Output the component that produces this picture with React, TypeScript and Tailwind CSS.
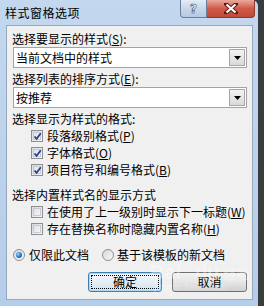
import React from "react";

const F = { fontFamily: '"Noto Sans CJK SC", "Noto Sans", sans-serif' };

function Check({ checked }: { checked: boolean }) {
  return (
    <span className="relative w-[12px] h-[12px] border border-[#8e8f8f] bg-gradient-to-br from-[#d6d9de] to-[#f8f8f8] shrink-0 flex items-center justify-center">
      <span className="w-[8px] h-[8px] border border-[#c7cbd1] bg-gradient-to-br from-[#dfe2e6] to-[#f6f6f6] flex items-center justify-center">
        {checked && (
          <svg width="9" height="9" viewBox="0 0 9 9" className="absolute left-[1px] top-[1px]">
            <path d="M1.5 4.5 L3.6 6.8 L7.8 1.2" fill="none" stroke="#2a3e92" strokeWidth="1.8" />
          </svg>
        )}
      </span>
    </span>
  );
}

function Radio({ on }: { on: boolean }) {
  return (
    <span className="w-[12px] h-[12px] rounded-full border border-[#8e8f8f] bg-gradient-to-br from-[#d4d7dc] to-[#fafafa] shrink-0 flex items-center justify-center">
      {on && (
        <span className="w-[6px] h-[6px] rounded-full bg-[radial-gradient(circle_at_35%_35%,#8fd0ff,#1a6fc4_60%,#0d4e9a)]" />
      )}
    </span>
  );
}

function Select({ text }: { text: string }) {
  return (
    <div className="ml-[6px] mr-[5px] h-[21px] border border-[#a3a3a3] bg-white flex items-center">
      <span className="pl-[2px] flex-1 text-[12px] leading-[16px] text-black">{text}</span>
      <span className="w-[16px] h-[17px] mr-[1px] border border-[#a6a6a6] bg-gradient-to-b from-[#f3f3f3] to-[#d9d9d9] flex items-center justify-center">
        <svg width="7" height="4" viewBox="0 0 7 4"><path d="M0 0 H7 L3.5 4 Z" fill="#000" /></svg>
      </span>
    </div>
  );
}

function Label({ children, className = "" }: { children: React.ReactNode; className?: string }) {
  return <div className={"pl-[5px] h-[16px] text-[12px] leading-[16px] text-black whitespace-nowrap " + className}>{children}</div>;
}

function CheckRow({ checked, children }: { checked: boolean; children: React.ReactNode }) {
  return (
    <div className="h-[17px] pl-[24px] flex items-center gap-[4px] text-[12px] leading-[16px] text-black whitespace-nowrap">
      <Check checked={checked} />
      <span>{children}</span>
    </div>
  );
}

export default function App() {
  return (
    <div style={F} className="w-[264px] h-[306px] bg-[#3a3d40] overflow-hidden">
      <div className="relative w-[258px] h-[306px] rounded-tr-[6px] bg-gradient-to-b from-[#c3d8ef] via-[#bcd3ec] to-[#b4cde9] flex flex-col">
        {/* title bar */}
        <div className="h-[25px] flex items-start shrink-0">
          <div className="pl-[5px] pt-[5px] text-[12px] leading-[16px] tracking-[0.5px] text-black">样式窗格选项</div>
          <div className="ml-auto mr-[3px] flex">
            <div className="w-[27px] h-[18px] rounded-bl-[4px] border border-[#6c7f99] border-t-0 bg-gradient-to-b from-[#e3ecf6] via-[#c8d7ea] to-[#b7c9e1] flex items-center justify-center">
              <span className="text-[12px] font-bold leading-[14px] text-white [-webkit-text-stroke:0.6px_#3c4d66]" style={{ fontFamily: '"DejaVu Sans", sans-serif' }}>?</span>
            </div>
            <div className="w-[48px] h-[18px] rounded-br-[4px] border border-[#8c3a32] border-t-0 border-l-0 bg-gradient-to-b from-[#e9a89c] via-[#cf5a48] to-[#c04a38] flex items-center justify-center">
              <svg width="14" height="11" viewBox="0 0 14 11">
                <path d="M2 1 L12 10 M12 1 L2 10" stroke="#5a1a12" strokeWidth="4" strokeLinecap="square" />
                <path d="M2.5 1.5 L11.5 9.5 M11.5 1.5 L2.5 9.5" stroke="#ffffff" strokeWidth="2.2" />
              </svg>
            </div>
          </div>
        </div>
        {/* client area */}
        <div className="ml-[6px] mr-[5px] h-[275px] border border-[#97a8bd] bg-[#f0f0f0] flex flex-col pt-[5px]">
          <Label>选择要显示的样式(<u>S</u>):</Label>
          <Select text="当前文档中的样式" />
          <Label className="mt-[3px]">选择列表的排序方式(<u>E</u>):</Label>
          <Select text="按推荐" />
          <Label className="mt-[3px]">选择显示为样式的格式:</Label>
          <CheckRow checked>段落级别格式(<u>P</u>)</CheckRow>
          <CheckRow checked>字体格式(<u>O</u>)</CheckRow>
          <CheckRow checked>项目符号和编号格式(<u>B</u>)</CheckRow>
          <Label className="mt-[9px]">选择内置样式名的显示方式</Label>
          <CheckRow checked={false}>在使用了上一级别时显示下一标题(<u>W</u>)</CheckRow>
          <CheckRow checked={false}>存在替换名称时隐藏内置名称(<u>H</u>)</CheckRow>
          <div className="mt-[9px] h-[17px] pl-[6px] flex items-center text-[12px] leading-[16px] text-black whitespace-nowrap">
            <Radio on />
            <span className="ml-[4px]">仅限此文档</span>
            <span className="ml-[13px]"><Radio on={false} /></span>
            <span className="ml-[3px]">基于该模板的新文档</span>
          </div>
          <div className="mt-[9px] pr-[5px] flex justify-end gap-[10px]">
            <div className="w-[74px] h-[20px] rounded-[3px] border border-[#3c7fb1] bg-gradient-to-b from-[#f2f7fb] via-[#e5eef6] to-[#d3e2ef] p-[2px] shadow-[inset_0_0_0_1px_#a8d8f5]">
              <div className="w-full h-full border border-dotted border-black flex items-center justify-center text-[12px] leading-[14px] text-black">确定</div>
            </div>
            <div className="w-[75px] h-[20px] rounded-[3px] border border-[#707070] bg-gradient-to-b from-[#f2f2f2] via-[#e6e6e6] to-[#d0d0d0] flex items-center justify-center text-[12px] leading-[14px] text-black">取消</div>
          </div>
        </div>
        {/* watermark */}
        <div className="absolute left-[150px] top-[262px] text-white/35 pointer-events-none leading-none" style={{ fontFamily: '"Liberation Sans", sans-serif' }}>
          <div className="text-[20px] font-bold">Bai<span className="ml-[14px]">du</span><span className="ml-[4px] text-[13px]" style={F}>经验</span></div>
          <div className="text-[9px] mt-[1px] ml-[4px]">jingyan.baidu.com</div>
        </div>
      </div>
    </div>
  );
}
